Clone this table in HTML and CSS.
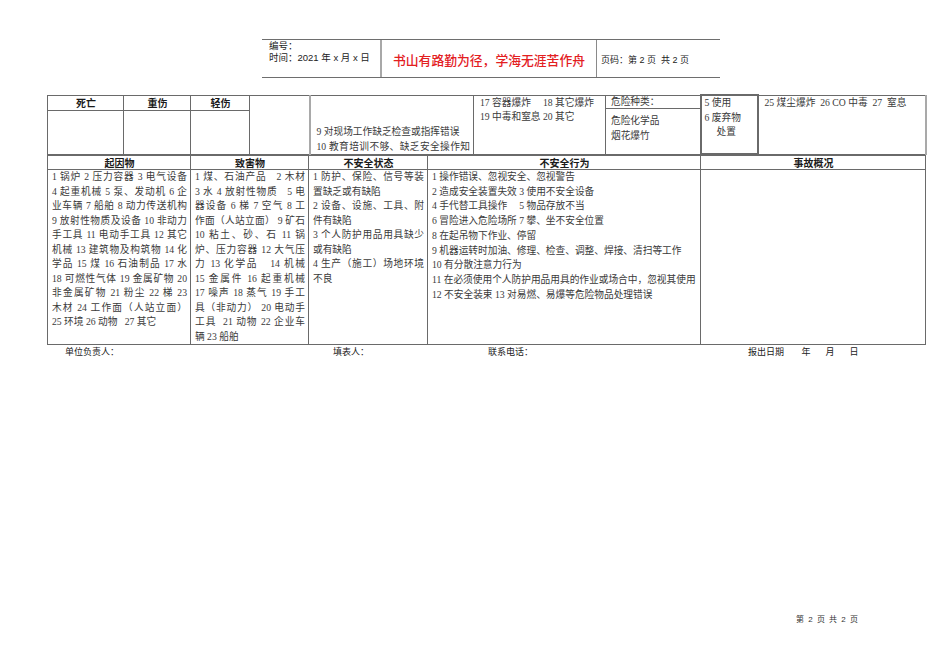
FILE: index.html
```html
<!DOCTYPE html>
<html lang="zh-CN">
<head>
<meta charset="utf-8">
<title>事故登记表</title>
<link rel="stylesheet" href="styles.css">
</head>
<body>
<div class="page">
  <div class="header">
    <div class="h-left">
      <div>编号：</div>
      <div>时间：2021 年 x 月 x 日</div>
    </div>
    <div class="h-mid">书山有路勤为径，学海无涯苦作舟</div>
    <div class="h-right">页码：第 2 页&nbsp; 共 2 页</div>
  </div>

  <table class="tbl top">
    <colgroup>
      <col class="c76"><col class="c67"><col class="c59"><col class="c60"><col class="c164"><col class="c132"><col class="c95"><col class="c57"><col class="c168">
    </colgroup>
    <tr class="r1">
      <th>死亡</th>
      <th>重伤</th>
      <th>轻伤</th>
      <td rowspan="2"></td>
      <td rowspan="2" class="bottom grey-left">
        <div>9 对现场工作缺乏检查或指挥错误</div>
        <div class="j">10 教育培训不够、缺乏安全操作知</div>
      </td>
      <td rowspan="2" class="topal">
        <div>17 容器爆炸&nbsp;&nbsp;&nbsp;&nbsp; 18 其它爆炸</div>
        <div>19 中毒和窒息 20 其它</div>
      </td>
      <td rowspan="2" class="topal nopad">
        <div class="kind-head">危险种类：</div>
        <div class="kind-body">
          <div>危险化学品</div>
          <div>烟花爆竹</div>
        </div>
      </td>
      <td rowspan="2" class="topal boxed">
        <div>5 使用</div>
        <div>6 废弃物</div>
        <div class="indent">处置</div>
      </td>
      <td rowspan="2" class="topal grey-right">
        <div>25 煤尘爆炸&nbsp; 26 CO 中毒&nbsp; 27&nbsp; 窒息</div>
      </td>
    </tr>
    <tr class="r2">
      <td></td>
      <td></td>
      <td></td>
    </tr>
  </table>

  <table class="tbl bot">
    <colgroup>
      <col class="c143"><col class="c118"><col class="c119"><col class="c273"><col class="c225">
    </colgroup>
    <tr class="hr">
      <th>起因物</th>
      <th>致害物</th>
      <th>不安全状态</th>
      <th>不安全行为</th>
      <th>事故概况</th>
    </tr>
    <tr class="br">
      <td>
        <div class="j">1 锅炉 2 压力容器 3 电气设备</div>
        <div class="j">4 起重机械 5 泵、发动机 6 企</div>
        <div class="j">业车辆 7 船舶 8 动力传送机构</div>
        <div class="j">9 放射性物质及设备 10 非动力</div>
        <div class="j">手工具 11 电动手工具 12 其它</div>
        <div class="j">机械 13 建筑物及构筑物 14 化</div>
        <div class="j">学品 15 煤 16 石油制品 17 水</div>
        <div class="j">18 可燃性气体 19 金属矿物 20</div>
        <div class="j">非金属矿物 21 粉尘 22 梯 23</div>
        <div class="j">木材 24 工作面（人站立面）</div>
        <div>25 环境 26 动物&nbsp;&nbsp; 27 其它</div>
      </td>
      <td>
        <div class="j">1 煤、石油产品&nbsp;&nbsp; 2 木材</div>
        <div class="j">3 水 4 放射性物质&nbsp;&nbsp; 5 电</div>
        <div class="j">器设备 6 梯 7 空气 8 工</div>
        <div class="j">作面（人站立面） 9 矿石</div>
        <div class="j">10 粘土、砂、石 11 锅</div>
        <div class="j">炉、压力容器 12 大气压</div>
        <div class="j">力 13 化学品&nbsp;&nbsp; 14 机械</div>
        <div class="j">15 金属件 16 起重机械</div>
        <div class="j">17 噪声 18 蒸气 19 手工</div>
        <div class="j">具（非动力） 20 电动手</div>
        <div class="j">工具&nbsp; 21 动物 22 企业车</div>
        <div>辆 23 船舶</div>
      </td>
      <td>
        <div class="j">1 防护、保险、信号等装</div>
        <div>置缺乏或有缺陷</div>
        <div class="j">2 设备、设施、工具、附</div>
        <div>件有缺陷</div>
        <div class="j">3 个人防护用品用具缺少</div>
        <div>或有缺陷</div>
        <div class="j">4 生产（施工）场地环境</div>
        <div>不良</div>
      </td>
      <td class="act">
        <div>1 操作错误、忽视安全、忽视警告</div>
        <div>2 造成安全装置失效 3 使用不安全设备</div>
        <div>4 手代替工具操作&nbsp;&nbsp;&nbsp;&nbsp; 5 物品存放不当</div>
        <div>6 冒险进入危险场所 7 攀、坐不安全位置</div>
        <div>8 在起吊物下作业、停留</div>
        <div>9 机器运转时加油、修理、检查、调整、焊接、清扫等工作</div>
        <div>10 有分散注意力行为</div>
        <div>11 在必须使用个人防护用品用具的作业或场合中，忽视其使用</div>
        <div>12 不安全装束 13 对易燃、易爆等危险物品处理错误</div>
      </td>
      <td></td>
    </tr>
  </table>

  <div class="footer">
    <span class="f1">单位负责人：</span>
    <span class="f2">填表人：</span>
    <span class="f3">联系电话：</span>
    <span class="f4">报出日期&nbsp;&nbsp;&nbsp;&nbsp;&nbsp;&nbsp; 年&nbsp;&nbsp;&nbsp;&nbsp;&nbsp; 月&nbsp;&nbsp;&nbsp;&nbsp;&nbsp; 日</span>
  </div>

  <div class="pagenum">第 2 页 共 2 页</div>
</div>
</body>
</html>
```

FILE: styles.css
```css
html, body {
  margin: 0;
  padding: 0;
  background: #ffffff;
}

.page {
  width: 950px;
  height: 671px;
  overflow: hidden;
  font-family: "Liberation Serif", "Noto Sans CJK SC", serif;
  color: #3a3a3a;
}

/* ---------- header ---------- */
.header {
  display: flex;
  margin: 39px 0 0 262px;
  width: 458px;
  height: 37px;
  border-top: 1px solid #6e6e6e;
  border-bottom: 1px solid #6e6e6e;
  font-family: "Liberation Sans", "Noto Sans CJK SC", sans-serif;
}

.h-left {
  width: 111px;
  padding-left: 7px;
  border-right: 2px solid #a8a8a8;
  font-size: 9.5px;
  line-height: 12px;
  color: #222;
}

.h-mid {
  width: 214px;
  display: flex;
  align-items: center;
  justify-content: center;
  padding-top: 2px;
  font-size: 12.8px;
  font-weight: 500;
  color: #e3201f;
  border-right: 1px solid #8a8a8a;
}

.h-right {
  flex: 1;
  display: flex;
  align-items: center;
  padding-left: 4px;
  padding-top: 2px;
  font-size: 9px;
  color: #222;
}

/* ---------- tables ---------- */
.tbl {
  border-collapse: collapse;
  table-layout: fixed;
  width: 878px;
  margin-left: 47px;
  font-size: 9.7px;
  line-height: 14.5px;
}

.tbl.top {
  margin-top: 16px;
}

.tbl th,
.tbl td {
  border: 1px solid #6a6a6a;
  padding: 0 3px 0 4px;
  vertical-align: top;
  overflow: hidden;
  white-space: nowrap;
}

.tbl th {
  font-family: "Noto Sans CJK SC", sans-serif;
  font-weight: 700;
  font-size: 10px;
  color: #1a1a1a;
  text-align: center;
  vertical-align: middle;
  line-height: 13px;
}

.c76 { width: 76px; }
.c67 { width: 67px; }
.c59 { width: 59px; }
.c60 { width: 60px; }
.c164 { width: 164px; }
.c132 { width: 132px; }
.c95 { width: 95px; }
.c57 { width: 57px; }
.c168 { width: 168px; }

.c143 { width: 143px; }
.c118 { width: 118px; }
.c119 { width: 119px; }
.c273 { width: 273px; }
.c225 { width: 225px; }

.top .r1 { height: 15px; }
.top .r2 { height: 44px; }

.top td.bottom {
  vertical-align: bottom;
  padding-left: 6px;
  padding-bottom: 0;
  line-height: 15px;
}

.top td.topal {
  vertical-align: top;
  padding-top: 0;
  padding-left: 6px;
}

.grey-left {
  border-left: 2px solid #a9a9a9 !important;
}

.grey-right {
  border-right: 2px solid #a9a9a9 !important;
}

.top td.nopad {
  padding: 0;
}

.kind-head {
  height: 12px;
  line-height: 12px;
  padding: 0 0 0 5px;
  border-bottom: 1px solid #6a6a6a;
}

.kind-body {
  padding: 4px 0 0 5px;
  line-height: 15px;
}

.top td.boxed {
  border: 2px solid #6a6a6a;
  padding-left: 3px;
}

.indent {
  padding-left: 12px;
}

.j {
  text-align: justify;
  text-align-last: justify;
}

.bot .hr { height: 13px; }

.bot .br td {
  padding-top: 0;
  padding-bottom: 0;
  height: 172px;
}

.bot td.act {
  padding-left: 4px;
  padding-right: 0;
  line-height: 14.7px;
}

/* ---------- footer ---------- */
.footer {
  display: flex;
  margin-left: 65px;
  height: 14px;
  line-height: 14px;
  font-family: "Liberation Sans", "Noto Sans CJK SC", sans-serif;
  font-size: 9px;
  color: #222;
}

.f1 { width: 268px; }
.f2 { width: 155px; }
.f3 { width: 260px; }
.f4 { flex: none; }

.pagenum {
  margin: 254px 0 0 796px;
  font-family: "Liberation Sans", "Noto Sans CJK SC", sans-serif;
  font-size: 8px;
  letter-spacing: 1px;
  color: #333;
}
```
